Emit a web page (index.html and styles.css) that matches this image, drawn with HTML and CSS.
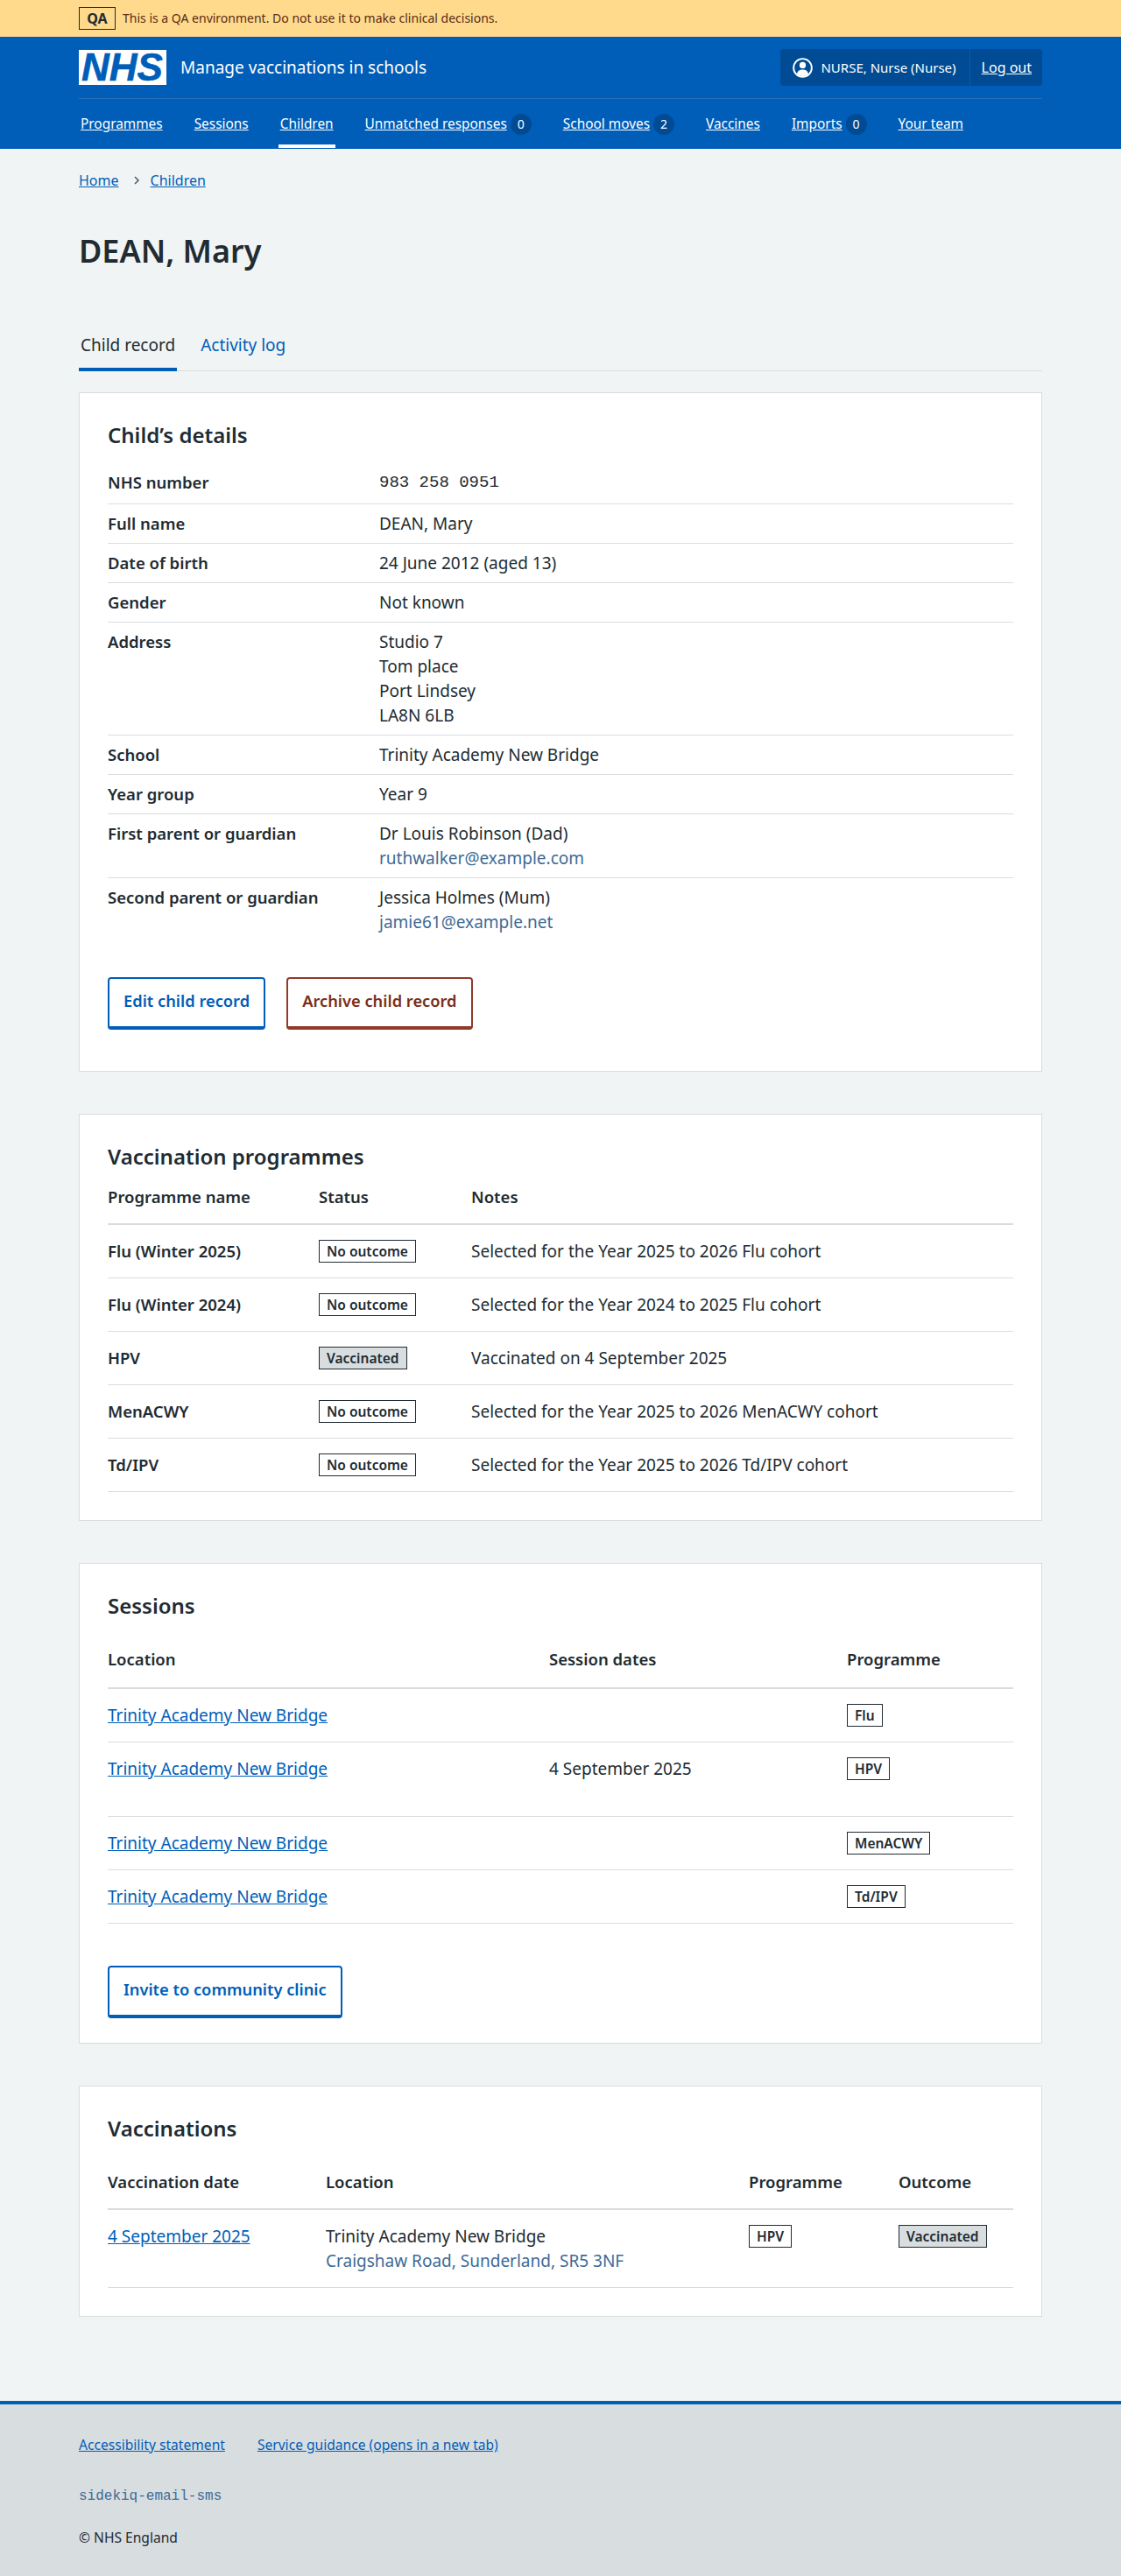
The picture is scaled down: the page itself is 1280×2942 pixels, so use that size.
FILE: index.html
```html
<!DOCTYPE html>
<html lang="en">

<head>
    <title>DEAN, Mary - Manage vaccinations in schools</title>
    <link rel="stylesheet" href="styles.css">
</head>

<body>
    <div class="env-banner">
        <div class="width">
            <strong class="env-tag">QA</strong>
            <span>This is a QA environment. Do not use it to make clinical decisions.</span>
        </div>
    </div>

    <header class="header">
        <div class="width">
            <div class="header-top">
                <a class="logo" href="#"><span class="logo-text">NHS</span></a>
                <a class="service-name" href="#">Manage vaccinations in schools</a>
                <div class="account">
                    <div class="account-user">
                        <svg class="account-icon" viewBox="0 0 24 24" width="23" height="23">
                            <circle cx="12" cy="12" r="10.800" fill="none" stroke="#fff" stroke-width="2"></circle>
                            <circle cx="12" cy="8.800" r="3.800" fill="#fff"></circle>
                            <path d="M5.200 19.500c.4-3.800 3-5.500 6.800-5.500s6.400 1.700 6.800 5.500A10 10 0 0 1 12 22a10 10 0 0 1-6.800-2.500z" fill="#fff"></path>
                        </svg>
                        <span>NURSE, Nurse (Nurse)</span>
                    </div>
                    <a class="account-link" href="#">Log out</a>
                </div>
            </div>
            <nav class="nav">
                <a class="nav-item" href="#"><span class="nav-link">Programmes</span></a>
                <a class="nav-item" href="#"><span class="nav-link">Sessions</span></a>
                <a class="nav-item nav-item-active" href="#"><span class="nav-link">Children</span></a>
                <a class="nav-item" href="#"><span class="nav-link">Unmatched responses</span><span class="count">0</span></a>
                <a class="nav-item" href="#"><span class="nav-link">School moves</span><span class="count">2</span></a>
                <a class="nav-item" href="#"><span class="nav-link">Vaccines</span></a>
                <a class="nav-item" href="#"><span class="nav-link">Imports</span><span class="count">0</span></a>
                <a class="nav-item" href="#"><span class="nav-link">Your team</span></a>
            </nav>
        </div>
    </header>

    <main class="width main">
        <div class="breadcrumb">
            <a href="#">Home</a>
            <svg class="breadcrumb-chevron" viewBox="0 0 8 12" width="8" height="12">
                <path d="M2 2l4 4-4 4" fill="none" stroke="#4c6272" stroke-width="1.600"></path>
            </svg>
            <a href="#">Children</a>
        </div>

        <h1 class="page-title">DEAN, Mary</h1>

        <div class="tabs">
            <a class="tab tab-active" href="#">Child record</a>
            <a class="tab" href="#">Activity log</a>
        </div>

        <section class="card card-details">
            <h2 class="card-title">Child’s details</h2>
            <dl class="summary">
                <div class="summary-row summary-row-first">
                    <dt>NHS number</dt>
                    <dd class="mono">983 258 0951</dd>
                </div>
                <div class="summary-row">
                    <dt>Full name</dt>
                    <dd>DEAN, Mary</dd>
                </div>
                <div class="summary-row">
                    <dt>Date of birth</dt>
                    <dd>24 June 2012 (aged 13)</dd>
                </div>
                <div class="summary-row">
                    <dt>Gender</dt>
                    <dd>Not known</dd>
                </div>
                <div class="summary-row">
                    <dt>Address</dt>
                    <dd>Studio 7<br>Tom place<br>Port Lindsey<br>LA8N 6LB</dd>
                </div>
                <div class="summary-row">
                    <dt>School</dt>
                    <dd>Trinity Academy New Bridge</dd>
                </div>
                <div class="summary-row">
                    <dt>Year group</dt>
                    <dd>Year 9</dd>
                </div>
                <div class="summary-row">
                    <dt>First parent or guardian</dt>
                    <dd>Dr Louis Robinson (Dad)<br><span class="muted">ruthwalker@example.com</span></dd>
                </div>
                <div class="summary-row summary-row-last">
                    <dt>Second parent or guardian</dt>
                    <dd>Jessica Holmes (Mum)<br><span class="muted">jamie61@example.net</span></dd>
                </div>
            </dl>
            <div class="button-group">
                <a class="button" href="#">Edit child record</a>
                <a class="button button-warning" href="#">Archive child record</a>
            </div>
        </section>

        <section class="card card-programmes">
            <h2 class="card-title">Vaccination programmes</h2>
            <table class="table">
                <colgroup>
                    <col class="col-241">
                    <col class="col-174">
                    <col>
                </colgroup>
                <thead>
                    <tr>
                        <th>Programme name</th>
                        <th>Status</th>
                        <th>Notes</th>
                    </tr>
                </thead>
                <tbody>
                    <tr>
                        <td class="bold">Flu (Winter 2025)</td>
                        <td><span class="tag">No outcome</span></td>
                        <td>Selected for the Year 2025 to 2026 Flu cohort</td>
                    </tr>
                    <tr>
                        <td class="bold">Flu (Winter 2024)</td>
                        <td><span class="tag">No outcome</span></td>
                        <td>Selected for the Year 2024 to 2025 Flu cohort</td>
                    </tr>
                    <tr>
                        <td class="bold">HPV</td>
                        <td><span class="tag tag-grey">Vaccinated</span></td>
                        <td>Vaccinated on 4 September 2025</td>
                    </tr>
                    <tr>
                        <td class="bold">MenACWY</td>
                        <td><span class="tag">No outcome</span></td>
                        <td>Selected for the Year 2025 to 2026 MenACWY cohort</td>
                    </tr>
                    <tr>
                        <td class="bold">Td/IPV</td>
                        <td><span class="tag">No outcome</span></td>
                        <td>Selected for the Year 2025 to 2026 Td/IPV cohort</td>
                    </tr>
                </tbody>
            </table>
        </section>

        <section class="card card-sessions">
            <h2 class="card-title">Sessions</h2>
            <table class="table">
                <colgroup>
                    <col class="col-504">
                    <col class="col-340">
                    <col>
                </colgroup>
                <thead>
                    <tr>
                        <th>Location</th>
                        <th>Session dates</th>
                        <th>Programme</th>
                    </tr>
                </thead>
                <tbody>
                    <tr>
                        <td><a href="#">Trinity Academy New Bridge</a></td>
                        <td></td>
                        <td><span class="tag">Flu</span></td>
                    </tr>
                    <tr>
                        <td><a href="#">Trinity Academy New Bridge</a></td>
                        <td><p class="session-date">4 September 2025</p></td>
                        <td><span class="tag">HPV</span></td>
                    </tr>
                    <tr>
                        <td><a href="#">Trinity Academy New Bridge</a></td>
                        <td></td>
                        <td><span class="tag">MenACWY</span></td>
                    </tr>
                    <tr>
                        <td><a href="#">Trinity Academy New Bridge</a></td>
                        <td></td>
                        <td><span class="tag">Td/IPV</span></td>
                    </tr>
                </tbody>
            </table>
            <a class="button button-invite" href="#">Invite to community clinic</a>
        </section>

        <section class="card card-vaccinations">
            <h2 class="card-title">Vaccinations</h2>
            <table class="table">
                <colgroup>
                    <col class="col-249">
                    <col class="col-483">
                    <col class="col-171">
                    <col>
                </colgroup>
                <thead>
                    <tr>
                        <th>Vaccination date</th>
                        <th>Location</th>
                        <th>Programme</th>
                        <th>Outcome</th>
                    </tr>
                </thead>
                <tbody>
                    <tr>
                        <td><a href="#">4 September 2025</a></td>
                        <td>Trinity Academy New Bridge<br><span class="muted">Craigshaw Road, Sunderland, SR5 3NF</span></td>
                        <td><span class="tag">HPV</span></td>
                        <td><span class="tag tag-grey">Vaccinated</span></td>
                    </tr>
                </tbody>
            </table>
        </section>
    </main>

    <footer class="footer">
        <div class="width">
            <div class="footer-links">
                <a href="#">Accessibility statement</a>
                <a href="#">Service guidance (opens in a new tab)</a>
            </div>
            <p class="footer-version">sidekiq-email-sms</p>
            <p class="footer-copyright">© NHS England</p>
        </div>
    </footer>
</body>

</html>
```

FILE: styles.css
```css
* {
    box-sizing: border-box;
}

body {
    margin: 0;
    background-color: #f0f4f5;
    color: #212b32;
    font-family: "Noto Sans", Arial, sans-serif;
    font-size: 19px;
    line-height: 28px;
}

a {
    color: #005eb8;
}

.width {
    width: 1100px;
    margin: 0 auto;
}

/* environment banner */
.env-banner {
    height: 42px;
    background-color: #ffda8d;
    color: #5b2a14;
    font-size: 14px;
    line-height: 20px;
}

.env-banner .width {
    display: flex;
    align-items: center;
    gap: 8px;
    height: 42px;
}

.env-tag {
    width: 42px;
    height: 26px;
    border: 1px solid #212b32;
    color: #212b32;
    font-size: 16px;
    line-height: 24px;
    text-align: center;
}

/* header */
.header {
    height: 128px;
    background-color: #005eb8;
    color: #fff;
}

.header a {
    color: #fff;
}

.header-top {
    display: flex;
    align-items: center;
    height: 71px;
    border-bottom: 1px solid #2c6db8;
}

.logo {
    display: block;
    width: 100px;
    height: 40px;
    background-color: #fff;
    text-decoration: none;
}

.header a.logo {
    color: #005eb8;
}

.logo-text {
    display: block;
    padding-left: 3px;
    font-family: "Liberation Sans", Arial, sans-serif;
    font-size: 44px;
    font-style: italic;
    font-weight: 700;
    line-height: 40px;
    -webkit-text-stroke: 0.6px #005eb8;
}

.service-name {
    margin-left: 16px;
    font-size: 19px;
    text-decoration: none;
}

.account {
    display: flex;
    align-items: stretch;
    height: 42px;
    margin-left: auto;
    border-radius: 4px;
    background-color: #004b93;
    font-size: 15px;
}

.account-user {
    display: flex;
    align-items: center;
    gap: 9px;
    padding: 0 15px 0 14px;
    border-right: 1px solid #005eb8;
}

.account-link {
    align-self: center;
    padding: 0 12px 0 13px;
    font-size: 16px;
}

.nav {
    display: flex;
    height: 56px;
    font-size: 15.400px;
    line-height: 24px;
    white-space: nowrap;
}

.nav-item {
    display: flex;
    align-items: flex-start;
    height: 56px;
    margin-right: 32px;
    padding: 17px 2px 0;
    text-decoration: none;
}

.nav-link {
    text-decoration: underline;
}

.nav-item-active {
    box-shadow: inset 0 -4px 0 #fff;
}

.count {
    width: 24px;
    height: 24px;
    margin-left: 4px;
    border-radius: 50%;
    background-color: #004b93;
    font-size: 14px;
    line-height: 24px;
    text-align: center;
}

/* page top */
.main {
    padding-top: 24px;
    padding-bottom: 48px;
}

.breadcrumb {
    display: flex;
    align-items: center;
    height: 24px;
    font-size: 16px;
}

.breadcrumb-chevron {
    margin: 0 12px 0 16px;
}

.page-title {
    margin: 47px 0 0;
    font-size: 36px;
    font-weight: 600;
    line-height: 44px;
}

.tabs {
    display: flex;
    gap: 25px;
    height: 65px;
    margin-top: 50px;
    padding-top: 21px;
    border-bottom: 1px solid #d8dde0;
}

.tab {
    height: 44px;
    padding: 0 2px;
    text-decoration: none;
}

.tab-active {
    border-bottom: 4px solid #005eb8;
    color: #212b32;
}

/* cards */
.card {
    margin-top: 24px;
    margin-bottom: 48px;
    padding: 32px;
    border: 1px solid #d8dde0;
    background-color: #fff;
}

.card-sessions {
    padding-bottom: 28px;
}

.card-title {
    margin: 0 0 16px;
    font-size: 24px;
    font-weight: 600;
    line-height: 32px;
}

/* summary list */
.summary {
    margin: 0 0 41px;
}

.summary-row {
    display: flex;
    padding: 8px 0;
    border-bottom: 1px solid #d8dde0;
}

.summary-row-first {
    padding-bottom: 10px;
}

.summary-row-last {
    border-bottom: 0;
}

.summary dt {
    width: 310px;
    font-size: 18.500px;
    font-weight: 600;
}

.summary dd {
    margin: 0;
}

.mono {
    font-family: "Liberation Mono", monospace;
}

.muted {
    color: #3d6a96;
}

.button-group {
    display: flex;
    gap: 24px;
    margin-bottom: 15px;
}

.button {
    display: inline-block;
    height: 60px;
    padding: 11px 16px;
    border: 2px solid #005eb8;
    border-bottom-width: 4px;
    border-radius: 4px;
    background-color: #fff;
    font-size: 18.300px;
    font-weight: 600;
    text-decoration: none;
}

.button-warning {
    border-color: #8f3a2a;
    color: #7a2e18;
}

/* tables */
.table {
    width: 100%;
    border-collapse: collapse;
    table-layout: fixed;
}

.col-241 {
    width: 241px;
}

.col-174 {
    width: 174px;
}

.col-504 {
    width: 504px;
}

.col-340 {
    width: 340px;
}

.col-249 {
    width: 249px;
}

.col-483 {
    width: 483px;
}

.col-171 {
    width: 171px;
}

.table th {
    padding: 15px 16px 16px 0;
    border-bottom: 2px solid #d8dde0;
    font-size: 18.500px;
    font-weight: 600;
    text-align: left;
    vertical-align: top;
}

.card-programmes .table th {
    padding-top: 0;
}

.card-sessions .table th {
    padding-bottom: 18px;
}

.table td {
    padding: 16px 16px 16px 0;
    border-bottom: 1px solid #d8dde0;
    vertical-align: top;
}

.table .bold {
    font-size: 18.500px;
    font-weight: 600;
}

.session-date {
    margin: 0 0 24px;
}

.tag {
    display: inline-block;
    height: 26px;
    margin-top: 1px;
    padding: 0 8px;
    border: 1px solid #212b32;
    background-color: #fff;
    font-size: 15.500px;
    font-weight: 600;
    line-height: 24px;
    vertical-align: top;
}

.tag-grey {
    background-color: #d8dde0;
}

.button-invite {
    margin-top: 48px;
}

/* footer */
.footer {
    height: 200px;
    padding-top: 32px;
    border-top: 4px solid #005eb8;
    background-color: #d8dde0;
    font-size: 15.600px;
}

.footer-links {
    display: flex;
    gap: 37px;
}

.footer-version {
    margin: 31px 0 0;
    color: #3d6a96;
    font-family: "Liberation Mono", monospace;
    font-size: 16px;
}

.footer-copyright {
    margin: 19px 0 0;
}
```
